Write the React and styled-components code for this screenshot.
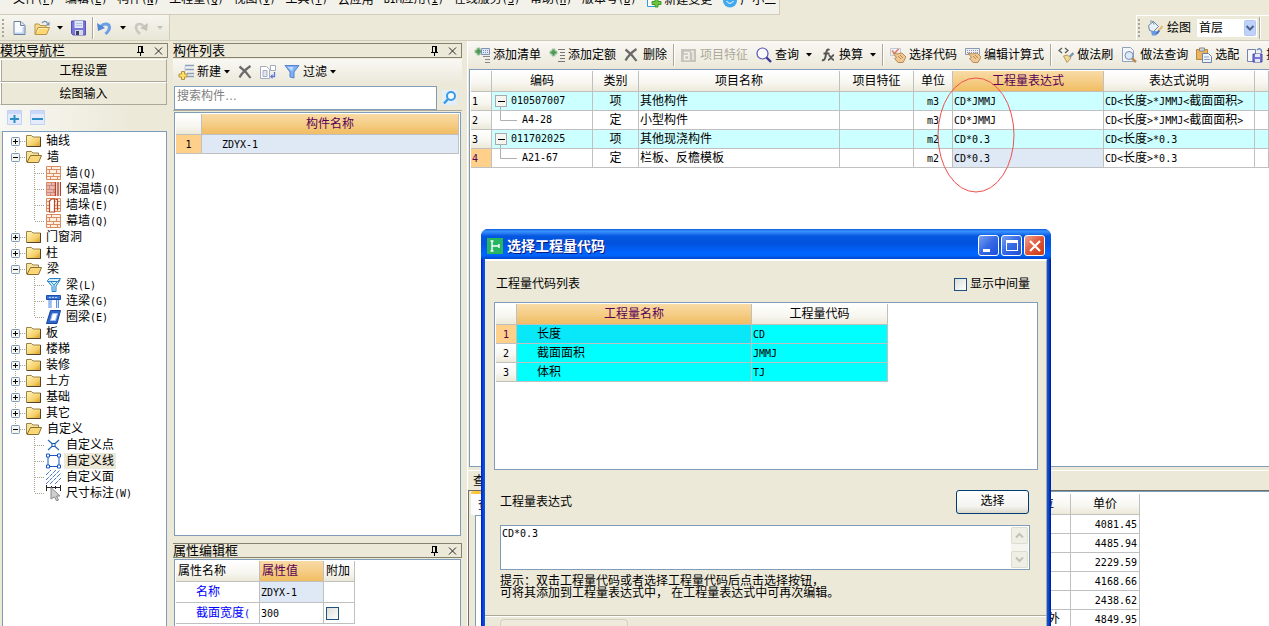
import React from 'react';
import styled, { createGlobalStyle, css } from 'styled-components';

const colors = {
  face: '#ece9d8',
  line: '#c0c0c0',
  field: '#7f9db9',
  shadow: '#aca899',
  purple: '#580058',
  cyan: '#ccffff',
  selected: '#dfe8f5',
  rowMark: '#ffd08a',
};

const GlobalStyle = createGlobalStyle`
  * {
    box-sizing: border-box;
  }

  body {
    margin: 0;
    background-color: ${colors.face};
    color: #000;
    font-family: 'Liberation Sans', 'Noto Sans CJK SC', sans-serif;
    font-size: 12px;
    line-height: 16px;
  }

  button,
  input,
  select,
  textarea {
    font: inherit;
    color: inherit;
  }

  svg {
    display: block;
    flex: none;
  }
`;

const headGradient = 'linear-gradient(#ffffff, #f7f6f0 60%, #ece9d8)';
const markGradient = 'linear-gradient(#f9dba6, #f5cd86 50%, #f0bd62)';

const Half = styled.span`
  font-family: 'DejaVu Sans Mono', 'Liberation Mono', monospace;
  font-size: 10px;
`;

// Latin runs take half the width of a Chinese character
function Mixed({ text }) {
  return text
    .split(/([\x20-\x7e]+)/)
    .map((part, i) => (i % 2 ? <Half key={i}>{part}</Half> : part));
}

/* ---------- page ---------- */

const Page = styled.div`
  position: relative;
  height: 100vh;
  display: flex;
  flex-direction: column;
  overflow: hidden;
`;

const MenuBar = styled.nav`
  align-self: flex-start;
  width: 780px;
  height: 15px;
  padding: 0 0 6px 13px;
  display: flex;
  align-items: flex-end;
  gap: 10px;
  overflow: hidden;
  white-space: nowrap;
  background-color: #f3f2ea;
  border-right: 1px solid #d0ccba;
  border-bottom: 1px solid #d0ccba;
`;

const MenuItem = styled.a`
  display: flex;
  align-items: center;
  gap: 2px;
  color: #000;
  text-decoration: none;
`;

const ToolbarRow = styled.div`
  height: 26px;
  flex: none;
  display: flex;
  justify-content: space-between;
  border-bottom: 1px solid #d0ccba;
`;

const FileTools = styled.div`
  width: 170px;
  padding-left: 2px;
  display: flex;
  align-items: center;
  background: linear-gradient(#f6f5ee, #e9e6d6);
  border-right: 1px solid #d0ccba;
`;

const FloorTools = styled.div`
  width: 133px;
  padding-left: 1px;
  display: flex;
  align-items: center;
  border-top: 1px solid #fff;
  border-left: 1px solid #fff;
`;

const Grip = styled.span`
  width: 2px;
  height: 18px;
  margin-right: 7px;
  background: repeating-linear-gradient(#a9a695 0 2px, transparent 2px 4px);
`;

const IconButton = styled.button`
  height: 22px;
  padding: 0;
  margin-right: ${({ $after = 0 }) => $after}px;
  display: flex;
  align-items: center;
  gap: ${({ $gap = 5 }) => $gap}px;
  background: none;
  border: none;
`;

const FloorLabel = styled.label`
  display: flex;
  align-items: center;
  gap: 4px;
  margin-right: 6px;
`;

const FloorPicker = styled.div`
  width: 60px;
  height: 18px;
  display: flex;
  align-items: center;
  background-color: #fff;
`;

const FloorSelect = styled.select`
  flex: 1;
  min-width: 0;
  height: 18px;
  padding: 0 2px;
  appearance: none;
  background: none;
  border: none;
`;

const Workspace = styled.div`
  flex: 1;
  min-height: 0;
  display: flex;
`;

const Column = styled.section`
  display: flex;
  flex-direction: column;
  min-width: 0;
  flex: none;
  width: ${({ $width }) => $width}px;
  margin-right: 5px;
  padding-top: 2px;
`;

const PanelTitle = styled.header`
  height: 15px;
  flex: none;
  margin-bottom: 1px;
  padding-right: 4px;
  display: flex;
  align-items: center;
  justify-content: space-between;
  font-size: 13px;
  line-height: 13px;
  border: 1px solid #85826f;
  border-left: none;
`;

const TitleActions = styled.span`
  display: flex;
  gap: 9px;
`;

const PlainButton = styled.button`
  padding: 0;
  background: none;
  border: none;
`;

/* ---------- left column ---------- */

const NavButton = styled.button`
  height: 23px;
  flex: none;
  padding: 1px 0 0;
  margin-right: 1px;
  background-color: ${colors.face};
  border: 1px solid #fff;
  border-right-color: ${colors.shadow};
  border-bottom-color: ${colors.shadow};
  box-shadow: inset 1px 0 0 ${colors.shadow};
`;

const TreeTools = styled.div`
  height: 26px;
  flex: none;
  padding: 0 7px;
  display: flex;
  align-items: center;
  gap: 8px;
  background: linear-gradient(90deg, #f8f8f4, #ece9d8 80%);
`;

const TreeBox = styled.div`
  flex: 1;
  margin: 0 1px 0 2px;
  padding: 1px 0 0 4px;
  background-color: #fff;
  border: 1px solid ${colors.field};
  border-bottom: none;
`;

const TreeList = styled.ul`
  margin: 0;
  padding: 0;
  list-style: none;
`;

const TreeRow = styled.div`
  height: 16px;
  display: flex;
  align-items: center;
  white-space: nowrap;
`;

const TreeLabel = styled.span`
  margin-left: 3px;
  padding: 0 2px;
  ${({ $selected }) =>
    $selected &&
    css`
      background-color: ${colors.face};
    `}
`;

/* ---------- middle column ---------- */

const Toolbar = styled.div`
  height: ${({ $height }) => $height}px;
  flex: none;
  padding-left: ${({ $start = 2 }) => $start}px;
  display: flex;
  align-items: center;
  overflow: hidden;
  white-space: nowrap;
  background: linear-gradient(#f9f8f4, #ebe8d9);
`;

const ToolButton = styled.button`
  height: 22px;
  flex: none;
  padding: 0 4px;
  display: flex;
  align-items: center;
  gap: 3px;
  background: none;
  border: none;

  &:disabled {
    color: #aca899;
  }
`;

const CaretBox = styled.span`
  margin-left: ${({ $wide }) => ($wide ? 4 : 0)}px;
`;

const Separator = styled.span`
  width: 2px;
  height: 22px;
  flex: none;
  margin: 0 2px;
  border-left: 1px solid ${colors.shadow};
  border-right: 1px solid #fff;
`;

const SearchRow = styled.form`
  height: 26px;
  flex: none;
  margin-bottom: 1px;
  padding-left: 1px;
  display: flex;
  align-items: center;
  gap: 5px;
  border-bottom: 1px solid ${colors.shadow};
`;

const SearchInput = styled.input`
  width: 263px;
  height: 24px;
  padding: 0 2px 4px;
  border: 1px solid ${colors.field};
  background-color: #fff;

  &::placeholder {
    color: #808080;
  }
`;

const SheetBox = styled.div`
  position: relative;
  flex: ${({ $height }) => ($height ? `0 0 ${$height}px` : '1')};
  min-height: 0;
  margin-left: ${({ $inset = 0 }) => $inset}px;
  margin-right: ${({ $inset = 0, $bleed }) => ($bleed ? 0 : $inset)}px;
  padding: 1px ${({ $bleed }) => ($bleed ? 0 : 1)}px 1px 1px;
  overflow: hidden;
  background-color: #fff;
  border: 1px solid ${colors.field};
  border-right-width: ${({ $bleed }) => ($bleed ? 0 : 1)}px;
  border-bottom-width: ${({ $open }) => ($open ? 0 : 1)}px;
`;

const Spacer = styled.div`
  height: 7px;
  flex: none;
`;

/* ---------- tables ---------- */

const Sheet = styled.table`
  width: ${({ $width }) => ($width ? `${$width}px` : '100%')};
  table-layout: fixed;
  border-collapse: separate;
  border-spacing: 0;
  line-height: 16px;
`;

const HeadCell = styled.th`
  height: 21px;
  padding: 0 2px;
  overflow: hidden;
  font-weight: normal;
  text-align: ${({ $align = 'center' }) => $align};
  white-space: nowrap;
  color: ${({ $marked }) => ($marked ? colors.purple : '#000')};
  background: ${({ $marked }) => ($marked ? markGradient : headGradient)};
  border-right: 1px solid ${colors.line};
  border-bottom: 1px solid ${colors.line};
`;

const Cell = styled.td`
  height: ${({ $tall }) => ($tall ? 21 : 19)}px;
  padding: 0 ${({ $pad = 1 }) => $pad}px;
  overflow: hidden;
  text-align: ${({ $align = 'left' }) => $align};
  white-space: nowrap;
  color: ${({ $color = '#000' }) => $color};
  background: ${({ $fill = '#fff' }) => $fill};
  border-right: 1px solid ${colors.line};
  border-bottom: 1px solid ${colors.line};
`;

const CodeContent = styled.div`
  height: 18px;
  display: flex;
  align-items: center;
`;

const CheckBox = styled.input`
  appearance: none;
  display: block;
  width: 13px;
  height: 13px;
  margin: 0;
  background: linear-gradient(135deg, #dcdcd7, #ffffff);
  border: 1px solid #1c5180;
`;

/* ---------- right column ---------- */

const MainColumn = styled.section`
  flex: 1;
  min-width: 0;
  display: flex;
  flex-direction: column;
  border-left: 1px solid #fff;
`;

const Marker = styled.svg`
  position: absolute;
  left: 467px;
  top: 7px;
`;

const LowerPane = styled.div`
  height: 156px;
  flex: none;
  margin-top: 3px;
  display: flex;
  flex-direction: column;
  border-top: 1px solid #fff;
`;

const LowerTitle = styled.div`
  height: 20px;
  padding: 2px 5px;
  border-bottom: 1px solid #716f64;
`;

const LowerBody = styled.div`
  flex: 1;
  display: flex;
  border-left: 1px solid #716f64;
`;

const TabPane = styled.div`
  width: 545px;
  flex: none;
  padding-left: 2px;
  display: flex;
  flex-direction: column;
  align-items: flex-start;
`;

const Tab = styled.button`
  height: 24px;
  padding: 0 7px;
  background-color: #fcfcfe;
  border: none;
  border-top: 3px solid #ffc73c;
  border-radius: 3px 3px 0 0;
`;

const TabBody = styled.div`
  flex: 1;
  align-self: stretch;
  margin-left: 4px;
  background-color: #fff;
  border: 1px solid ${colors.field};
`;

const PricePane = styled.div`
  flex: 1;
  padding-top: 2px;
  background-color: #fff;
  border-top: 1px solid ${colors.field};
`;

/* ---------- dialog ---------- */

const Dialog = styled.div`
  position: absolute;
  left: 481px;
  top: 229px;
  width: 570px;
  height: 430px;
  padding: 0 4px;
  display: flex;
  flex-direction: column;
  background: linear-gradient(90deg, #0019cf, #0855dd 3px, #0855dd 567px, #001590);
  border-radius: 7px 7px 0 0;
`;

const DialogTitle = styled.header`
  height: 30px;
  flex: none;
  margin: 0 -4px;
  padding: 3px 6px 0;
  display: flex;
  align-items: center;
  color: #fff;
  font-size: 14px;
  font-weight: bold;
  text-shadow: 1px 1px 0 #0a1883;
  border-radius: 7px 7px 0 0;
  background: linear-gradient(
    #0958d8,
    #3a93ff 2px,
    #2b80f5 4px,
    #0457e0 7px,
    #0252dd 14px,
    #0060f8 22px,
    #0066ff 26px,
    #0047cf
  );
`;

const DialogName = styled.h1`
  flex: 1;
  margin: 0 0 0 4px;
  font-size: 14px;
`;

const WindowButton = styled.button`
  width: 21px;
  height: 21px;
  margin-left: 2px;
  padding: 0;
  display: grid;
  place-items: center;
  border: 1px solid #fff;
  border-radius: 3px;
  background: ${({ $close }) =>
    $close
      ? 'linear-gradient(135deg, #eea58f, #e0563a 50%, #c83a12)'
      : 'linear-gradient(135deg, #7aa0f0, #3569e4 50%, #1d50d8)'};
`;

const DialogBody = styled.div`
  flex: 1;
  padding: 15px 8px 0 9px;
  display: flex;
  flex-direction: column;
  background-color: ${colors.face};
  border-top: 2px solid #fff;
  border-right: 1px solid ${colors.shadow};
`;

const DialogRow = styled.div`
  display: flex;
  align-items: center;
  justify-content: space-between;
  padding: 0 ${({ $right = 8 }) => $right}px 0 ${({ $left = 2 }) => $left}px;
  margin: ${({ $before = 0 }) => $before}px 0 ${({ $after }) => $after}px;
`;

const CheckLabel = styled.label`
  display: flex;
  align-items: center;
  gap: 3px;
`;

const PickButton = styled.button`
  width: 73px;
  height: 24px;
  padding: 0 0 2px;
  background: linear-gradient(#ffffff, #f3f3ef 70%, #dcd8cc);
  border: 1px solid #003c74;
  border-radius: 3px;
`;

const ExpressionBox = styled.div`
  width: 530px;
  height: 45px;
  margin: 0 0 5px 6px;
  padding: 1px;
  display: flex;
  background-color: #fff;
  border: 1px solid ${colors.field};
`;

const Expression = styled.textarea`
  flex: 1;
  padding: 0;
  resize: none;
  border: none;
  outline: none;
  background: none;
  font-family: 'DejaVu Sans Mono', 'Liberation Mono', monospace;
  font-size: 10px;
  line-height: 14px;
`;

const ScrollTrack = styled.div`
  width: 17px;
  display: flex;
  flex-direction: column;
  justify-content: space-between;
  background-color: #f5f4ef;
`;

const ScrollButton = styled.button`
  width: 17px;
  height: 17px;
  padding: 0;
  display: grid;
  place-items: center;
  background-color: #f0efe6;
  border: 1px solid #dddccf;
  border-radius: 2px;
`;

const Hint = styled.p`
  margin: 0 0 16px 6px;
  line-height: 12px;
  white-space: pre-line;
`;

const Footer = styled.div`
  margin: 0 -8px 0 -9px;
  padding: 3px 0 0 15px;
  border-top: 1px solid ${colors.shadow};
  box-shadow: inset 0 1px 0 #fff;
`;

const FooterButton = styled.button`
  display: block;
  width: 128px;
  height: 24px;
  background-color: #eeebdc;
  border: 1px solid #d2cfbd;
  border-radius: 4px;
`;

/* ---------- icons ---------- */

function Icon({ children, size = 16 }) {
  return (
    <svg width={size} height="16" viewBox={`0 0 ${size} 16`} aria-hidden="true">
      {children}
    </svg>
  );
}

function Caret({ wide, color = '#000' }) {
  return (
    <CaretBox $wide={wide}>
      <svg width="6" height="4" viewBox="0 0 6 4" aria-hidden="true">
        <path d="M0 0h6L3 3.5z" fill={color} />
      </svg>
    </CaretBox>
  );
}

const PinIcon = () => (
  <svg width="9" height="10" viewBox="0 0 9 10" shapeRendering="crispEdges" aria-hidden="true">
    <path d="M2 0h5v6h1v1H5v3H4V7H1V6h1zM3 1v5h2V1z" fill="#000" fillRule="evenodd" />
  </svg>
);

const CloseIcon = () => (
  <svg width="9" height="10" viewBox="0 0 9 10" aria-hidden="true">
    <path d="M1 1.5l7 7M8 1.5l-7 7" stroke="#222" />
  </svg>
);

const NewFileIcon = () => (
  <Icon>
    <path d="M3 1.500h7l4 4v9H3z" fill="#f7fbff" />
    <path d="M12.500 7v6.500H4" fill="none" stroke="#bcd2ee" strokeWidth="2" />
    <path d="M3 1.500h7l4 4v9H3z" fill="none" stroke="#6d7f9f" />
    <path d="M9.500 1.500v4h4" fill="#d6e4f6" stroke="#6d7f9f" />
  </Icon>
);

const OpenIcon = () => (
  <Icon>
    <path d="M1 14V4h4l1 1.500h6V8" fill="#f7dc8c" stroke="#b8954a" />
    <path d="M1 14.500l3-7h11.500l-3 7z" fill="#ffd873" stroke="#b8954a" />
    <path d="M3 12l2-3.500h8" fill="none" stroke="#ffefb8" />
    <path d="M8 3c2-2.500 4.500-2 5.500.5" fill="none" stroke="#7391b3" strokeWidth="1.400" />
    <path d="M15.500 1.500v4h-4z" fill="#7391b3" />
  </Icon>
);

const SaveIcon = () => (
  <Icon>
    <path d="M.5 1h14v14H2l-1.500-1.500z" fill="#7874d8" stroke="#5854b4" />
    <path d="M3.500 1h8.500v7H3.500z" fill="#dfe8f8" />
    <path d="M5 3.500h6M5 5.500h6" stroke="#b4c2e0" />
    <path d="M4 10h8v5H4z" fill="#d4dae8" />
    <path d="M5 11h3v4H5z" fill="#3c3f5e" />
  </Icon>
);

const UndoIcon = () => (
  <Icon>
    <path d="M5 6.500c3-4 8.500-3 8.500 1 0 3-2 4.500-4 6.500" fill="none" stroke="#6d9fe6" strokeWidth="3" />
    <path d="M1 3l1 8 7-3z" fill="#4f86d8" />
  </Icon>
);

const RedoIcon = () => (
  <Icon>
    <path d="M11 6.500C8 2.500 3 3.500 3 7.500c0 3 2 4.500 4 6.500" fill="none" stroke="#cac8c0" strokeWidth="2.600" />
    <path d="M15 3l-1 8-7-3z" fill="#c3c2bb" />
  </Icon>
);

const PaintIcon = () => (
  <Icon>
    <path d="M1.500 5.500l5-4 5 5-5 5-4-1z" fill="#e9eff6" stroke="#6c86a6" />
    <path d="M4 2.500c-2-2 2-3 3 2" fill="none" stroke="#6c86a6" />
    <path d="M4 11.500c4-1 6 0 8 1L9 15.500H5z" fill="#6b9ae2" />
    <path d="M15.500 6l-4 5" stroke="#e2b660" strokeWidth="2" />
    <path d="M11.500 10l1.500 1-2.500 3-2-.5z" fill="#3d6fc4" />
  </Icon>
);

const ComboArrow = () => (
  <svg width="13" height="16" viewBox="0 0 13 16" aria-hidden="true">
    <rect x="0.500" y="0.500" width="11" height="15" rx="1" fill="#bfd2fb" stroke="#b2c6f2" />
    <path d="M2.500 6L6 9.500 9.500 6" fill="none" stroke="#4d6185" strokeWidth="2" />
  </svg>
);

const PageAddIcon = () => (
  <Icon>
    <path d="M1.500.5h9v14h-9z" fill="#fff" stroke="#2f9ae0" />
    <path d="M9 7h3v2.500h3v3h-3V15H9v-2.500H6v-3h3z" fill="#6cc644" stroke="#3f9a2a" />
  </Icon>
);

const BearIcon = () => (
  <Icon>
    <circle cx="3.500" cy="3" r="2.500" fill="#41a9ef" />
    <circle cx="12.500" cy="3" r="2.500" fill="#41a9ef" />
    <ellipse cx="8" cy="9" rx="7" ry="6.500" fill="#41a9ef" />
    <path d="M4.500 9c2 3 5 3 7 0" fill="none" stroke="#fff" />
  </Icon>
);

const CreateIcon = () => (
  <Icon>
    <path d="M7 1.500h9M7 5.500h9M9 9.500h7M9 12.500h7" stroke="#8d9fc0" strokeWidth="1.500" />
    <path d="M7 2v8" stroke="#c3cee2" />
    <path d="M3.500 7.500h3v2.500h2.500v3H6.500v2.500h-3V13H1v-3h2.500z" fill="#ffe06a" stroke="#b8923a" />
  </Icon>
);

const DeleteIcon = ({ size = 16 }) => (
  <Icon size={size}>
    <path
      d="M1.500 2.500c4 3 8 7 11 11.500M12.500 2C8 5 4 9 1.500 13.500"
      fill="none"
      stroke="#6a6a6a"
      strokeWidth="2.200"
    />
  </Icon>
);

const CopyIcon = () => (
  <Icon>
    <path d="M.5 2.500h6l3 3v9h-9z" fill="#fff" stroke="#a3abc0" />
    <path d="M3 6.500h4v6H3z" fill="#e3e6ee" stroke="#a3abc0" />
    <path d="M10.500 1.500h5v5h-5z" fill="#fff" stroke="#a3abc0" />
    <path d="M14.500 8v4.500H11" fill="none" stroke="#5877d8" strokeWidth="1.300" />
    <path d="M12.500 10L10 12.500l2.500 2.500z" fill="#5877d8" />
  </Icon>
);

const FilterIcon = () => (
  <Icon>
    <path d="M1 1.500h14L10 8v6l-4-1V8z" fill="#7fb0f2" stroke="#5584d0" />
    <path d="M3.500 3h6L8 7z" fill="#c4dcfb" />
  </Icon>
);

const SearchIcon = () => (
  <Icon>
    <rect width="15" height="15" y="0" fill="#e1effc" />
    <circle cx="9" cy="6" r="4" fill="#f5fbff" stroke="#3c9be0" strokeWidth="2" />
    <path d="M6 9l-4 4.500" stroke="#3c9be0" strokeWidth="2.400" />
  </Icon>
);

const AddListIcon = () => (
  <Icon>
    <path d="M3 1h3v2h2v3H6v2H3V6H1V3h2z" fill="#4f9a55" stroke="#a7cba9" />
    <path d="M7.500 1.500h8v6h-8z" fill="#e0e8f8" stroke="#7d90b8" />
    <path d="M9 3.500h6M9 5.500h6" stroke="#7d90b8" strokeDasharray="1 1" />
    <path d="M9 9.500h7M11 12.500h5M11 15.500h5" stroke="#888" />
  </Icon>
);

const AddQuotaIcon = () => (
  <Icon>
    <path d="M3 2h3v2h2v3H6v2H3V7H1V4h2z" fill="#4f9a55" stroke="#a7cba9" />
    <path d="M9 2.500h7M11 5.500h5M11 8.500h5M11 11.500h5M9 14.500h7" stroke="#777" />
  </Icon>
);

const FeatureIcon = () => (
  <Icon>
    <rect x="0" y="2" width="15" height="13" fill="#c5c3ba" />
    <path d="M3 5.500h5v7H3.500v-4H8" fill="none" stroke="#f2f1ea" strokeWidth="1.600" />
    <path d="M10 4.500h2V13" fill="none" stroke="#f2f1ea" strokeWidth="1.400" />
  </Icon>
);

const QueryIcon = () => (
  <Icon>
    <circle cx="6.500" cy="6.500" r="5.500" fill="#fafaff" stroke="#5654b4" strokeWidth="1.200" />
    <path d="M10.500 10.500l4.500 4.500" stroke="#3a3894" strokeWidth="2.400" />
  </Icon>
);

const FxIcon = () => (
  <Icon>
    <path
      d="M9.500 3C7 1.500 6.500 4 6 7c-.5 4-1.500 7-4 6M3.500 6.500h6"
      fill="none"
      stroke="#555"
      strokeWidth="2"
    />
    <path d="M8.500 8c2 0 2.500 5 5.500 5M14 8c-2.500 0-3 5-6 5" fill="none" stroke="#555" strokeWidth="1.800" />
  </Icon>
);

const HandIcon = ({ keyboard }) => (
  <Icon>
    {keyboard ? (
      <>
        <path d="M.5 1.500h14v6H.5z" fill="#eef1f6" stroke="#8c98ac" />
        <path d="M2 3.500h11M2 5.500h11" stroke="#8c98ac" strokeDasharray="1 1" />
      </>
    ) : (
      <>
        <path d="M.5 1.500h10v7H.5z" fill="#eceff4" stroke="#c4c9d3" />
        <path d="M2 3.500l2.500 3 4-4.500" fill="none" stroke="#e87a66" strokeWidth="1.500" />
      </>
    )}
    <path d="M3 6l4 1 5-1 4 4-3 5.500H8L4.500 11.500l2-1z" fill="#f0c894" stroke="#b98a52" />
    <path d="M8 9l3 3M10 8l3 3" stroke="#b98a52" />
  </Icon>
);

const BrushIcon = () => (
  <Icon>
    <path d="M4 1L1 3.500 4 6M7 1l3 2.500L7 6" fill="none" stroke="#555" strokeWidth="1.200" />
    <path d="M15.500 6l-4 4" stroke="#7a93b8" strokeWidth="2.400" />
    <path d="M5.500 9l4-1 3.500 3-4 4.500z" fill="#f1d79b" stroke="#b99a58" />
  </Icon>
);

const PageQueryIcon = () => (
  <Icon>
    <path d="M1.500.5h8l3 3v11h-11z" fill="#f3f7fc" stroke="#8ea0ba" />
    <circle cx="8" cy="8.500" r="4" fill="#dbeafb" stroke="#7d8fa9" />
    <path d="M11 11.500l4 3.500" stroke="#ba8b4c" strokeWidth="2.400" />
  </Icon>
);

const PasteIcon = () => (
  <Icon>
    <path d="M.5 2.500h11v10H.5z" fill="#ebb45e" stroke="#b98636" />
    <path d="M3.500 1h5v3h-5z" fill="#d4d8e0" stroke="#888" />
    <path d="M6.500 6.500h6l3 3v6h-9z" fill="#eff4fb" stroke="#6f83a5" />
    <path d="M8 10h5M8 12.500h6" stroke="#93a5c2" />
  </Icon>
);

const ExtractIcon = () => (
  <Icon>
    <path d="M.5 2.500h8v12h-8z" fill="#f4f7fc" stroke="#7385ad" />
    <path d="M6 7h9v8H6z" fill="#7874d8" stroke="#4a46a4" />
    <path d="M8 7h5v3H8zM8 12h5v3H8z" fill="#e3e8f5" />
    <path d="M10 3c3-3 5 0 4.500 3" fill="none" stroke="#6289bd" strokeWidth="1.400" />
  </Icon>
);

const FoldIcon = ({ plus }) => (
  <Icon size={15}>
    <path d="M.5.500h14v14H.500z" fill="#e3ebfc" stroke="#c3d2f4" />
    <path d="M1 1h13v3H1z" fill="#cbd8f8" />
    <path d={plus ? 'M3 9h9M7.500 5v8' : 'M2 9h11'} stroke="#2c8fc6" strokeWidth="2" />
  </Icon>
);

const FolderIcon = () => (
  <Icon size={15}>
    <defs>
      <linearGradient id="folder" x1="0" y1="0" x2="1" y2="1">
        <stop offset="0" stopColor="#fff4bd" />
        <stop offset="0.600" stopColor="#f7d36e" />
        <stop offset="1" stopColor="#d49b26" />
      </linearGradient>
    </defs>
    <path d="M.5 4V2.500h5L7 4h7.500v9.500H.500z" fill="url(#folder)" stroke="#9c8347" />
    <path d="M14.500 4v9.500H1" fill="none" stroke="#54452a" />
  </Icon>
);

const FolderOpenIcon = () => (
  <Icon>
    <path d="M.5 13V2.500h5L7 4h5.500v3" fill="#f7e3a0" stroke="#9c8347" />
    <path d="M1 13.500l3.500-7h11l-3 7z" fill="#fbd778" stroke="#8a6f2f" />
  </Icon>
);

const BrickIcon = ({ kind }) => (
  <Icon size={15}>
    <path d="M.5 1.500h14v13H.500z" fill={kind === 'warm' ? '#eab8ae' : '#fff1e2'} stroke="#d98a5e" />
    <path
      d="M0 4.500h15M0 8.500h15M0 11.500h15M5.500 1v3M10.500 4v4M3.500 4v4M7.500 8v3M11.500 11v3M4.500 11v3"
      fill="none"
      stroke={kind === 'warm' ? '#c98a80' : '#dc8b62'}
    />
    {kind === 'warm' && (
      <>
        <path d="M9 1h6v14H9z" fill="#fff" />
        <path d="M9.500 1v14M12 1v14M14.500 1v14" stroke="#b54326" strokeWidth="1.400" />
      </>
    )}
    {kind === 'pier' && (
      <path d="M3.500 15V4l2-2h3v13zM9.500 2.500h2V13" fill="#fff" stroke="#b54a26" strokeWidth="1.200" />
    )}
  </Icon>
);

const BeamIcon = () => (
  <Icon size={15}>
    <path d="M1.500 3.500l2-2h11l-2 3h-11zM2 4.500l4 5v5h4V9l4-6" fill="#d3ecfb" stroke="#2a7fc4" />
    <path d="M4 4l4 4 5-5M8 8v6" fill="none" stroke="#2a9fd4" />
  </Icon>
);

const LinkBeamIcon = () => (
  <Icon size={15}>
    <path d="M.5 2.500h14v4H.500z" fill="#3a72d4" stroke="#1c4cae" />
    <path d="M3 4.500h9" stroke="#b8d0f8" strokeDasharray="2 1" />
    <path d="M4 7v8M11.500 7v8" stroke="#5f93e6" strokeWidth="3" />
    <path d="M4 7v8M11.500 7v8" stroke="#d4e4fb" />
  </Icon>
);

const RingBeamIcon = () => (
  <Icon size={15}>
    <path d="M4.500 1.500h10l-3.500 13H.500z" fill="#2c64cc" stroke="#1a459c" />
    <path d="M6.500 4.500h5l-2 7h-5z" fill="#fff" stroke="#9fc0f4" />
  </Icon>
);

const PointIcon = () => (
  <Icon size={15}>
    <path d="M2 3l11 10M13 3L2 13" stroke="#2a6ab8" strokeWidth="1.200" />
    <path d="M6 6.500h3v3H6z" fill="#fff" stroke="#1a55b8" />
  </Icon>
);

const LineIcon = () => (
  <Icon size={15}>
    <path d="M2 2.500h11v11H2z" fill="none" stroke="#1b56c4" />
    <path d="M.5 1h3v3h-3zM11.500 1h3v3h-3zM.5 12h3v3h-3zM11.500 12h3v3h-3z" fill="#fff" stroke="#1b56c4" />
  </Icon>
);

const AreaIcon = () => (
  <Icon size={15}>
    <path d="M0 6l5-5M0 11L10 1M0 15L14 1M4 15L15 4M9 15l6-6" stroke="#4a72c4" strokeDasharray="4 1" />
  </Icon>
);

const SizeIcon = () => (
  <Icon size={15}>
    <path d="M.5 0v6M14.500 0v6M0 2.500h15M5.500 1v3M9.500 1v3" stroke="#222" />
    <path d="M5 2.500l9 8.500h-3.500l2 4-2 .8-2-4L5 14z" fill="#cfcfcf" stroke="#888" />
  </Icon>
);

/* ---------- tree ---------- */

const tree = [
  { name: '轴线' },
  {
    name: '墙',
    items: [
      { name: '墙(Q)', icon: <BrickIcon /> },
      { name: '保温墙(Q)', icon: <BrickIcon kind="warm" /> },
      { name: '墙垛(E)', icon: <BrickIcon kind="pier" /> },
      { name: '幕墙(Q)', icon: <BrickIcon /> },
    ],
  },
  { name: '门窗洞' },
  { name: '柱' },
  {
    name: '梁',
    items: [
      { name: '梁(L)', icon: <BeamIcon /> },
      { name: '连梁(G)', icon: <LinkBeamIcon /> },
      { name: '圈梁(E)', icon: <RingBeamIcon /> },
    ],
  },
  { name: '板' },
  { name: '楼梯' },
  { name: '装修' },
  { name: '土方' },
  { name: '基础' },
  { name: '其它' },
  {
    name: '自定义',
    items: [
      { name: '自定义点', icon: <PointIcon /> },
      { name: '自定义线', icon: <LineIcon />, selected: true },
      { name: '自定义面', icon: <AreaIcon /> },
      { name: '尺寸标注(W)', icon: <SizeIcon /> },
    ],
  },
];

const dots = { stroke: '#a5a28c', strokeDasharray: '1 1', fill: 'none' };

function Expander({ open, first, last }) {
  return (
    <svg width="19" height="16" viewBox="0 0 19 16" aria-hidden="true">
      <path d={`M8.500 ${first ? 8 : 0}V${last ? 8 : 16}M13 8.500h6`} {...dots} />
      <rect x="4.500" y="4.500" width="8" height="8" rx="1" fill="#f6f5f0" stroke="#7898b5" />
      <path d={open ? 'M6 8.500h5' : 'M6 8.500h5M8.500 6v5'} stroke="#000" />
    </svg>
  );
}

function Branch({ trunk, last }) {
  return (
    <svg width="39" height="16" viewBox="0 0 39 16" aria-hidden="true">
      {trunk && <path d="M8.500 0v16" {...dots} />}
      <path d={`M27.500 0V${last ? 8 : 16}M28 8.500h10`} {...dots} />
    </svg>
  );
}

function Tree() {
  return (
    <TreeList>
      {tree.map((group, g) => {
        const last = g === tree.length - 1;
        return (
          <li key={group.name}>
            <TreeRow>
              <PlainButton aria-label={group.name}>
                <Expander open={!!group.items} first={g === 0} last={last} />
              </PlainButton>
              {group.items ? <FolderOpenIcon /> : <FolderIcon />}
              <TreeLabel>{group.name}</TreeLabel>
            </TreeRow>
            {group.items && (
              <TreeList>
                {group.items.map((item, i) => (
                  <TreeRow as="li" key={item.name}>
                    <Branch trunk={!last} last={i === group.items.length - 1} />
                    {item.icon}
                    <TreeLabel $selected={item.selected}>
                      <Mixed text={item.name} />
                    </TreeLabel>
                  </TreeRow>
                ))}
              </TreeList>
            )}
          </li>
        );
      })}
    </TreeList>
  );
}

/* ---------- data ---------- */

const menus = [
  ['文件', 'F'],
  ['编辑', 'E'],
  ['构件', 'N'],
  ['工程量', 'Q'],
  ['视图', 'V'],
  ['工具', 'T'],
  ['云应用'],
  ['BIM应用', 'I'],
  ['在线服务', 'S'],
  ['帮助', 'H'],
  ['版本号', 'B'],
];

const methods = [
  { code: '010507007', kind: '项', name: '其他构件', unit: 'm3', expr: 'CD*JMMJ', note: 'CD<长度>*JMMJ<截面面积>', parent: true },
  { code: 'A4-28', kind: '定', name: '小型构件', unit: 'm3', expr: 'CD*JMMJ', note: 'CD<长度>*JMMJ<截面面积>' },
  { code: '011702025', kind: '项', name: '其他现浇构件', unit: 'm2', expr: 'CD*0.3', note: 'CD<长度>*0.3', parent: true },
  { code: 'A21-67', kind: '定', name: '栏板、反檐模板', unit: 'm2', expr: 'CD*0.3', note: 'CD<长度>*0.3', current: true },
];

const quantities = [
  ['长度', 'CD'],
  ['截面面积', 'JMMJ'],
  ['体积', 'TJ'],
];

const prices = [
  ['', '4081.45'],
  ['', '4485.94'],
  ['', '2229.59'],
  ['', '4168.66'],
  ['', '2438.62'],
  ['外', '4849.95'],
];

function CodeBranch({ parent }) {
  return parent ? (
    <svg width="18" height="18" viewBox="0 0 18 18" aria-hidden="true">
      <rect x="2.500" y="3.500" width="11" height="11" fill="#f6f5f0" stroke="#aaa" />
      <path d="M5 9.500h7" stroke="#000" />
      <path d="M7.500 15v3" stroke="#b0b0b0" />
    </svg>
  ) : (
    <svg width="29" height="18" viewBox="0 0 29 18" aria-hidden="true">
      <path d="M7.500 0v9.500H24" fill="none" stroke="#b0b0b0" />
    </svg>
  );
}

function Columns({ widths }) {
  return (
    <colgroup>
      {widths.map((width, i) => (
        <col key={i} width={width} />
      ))}
    </colgroup>
  );
}

function Title({ children }) {
  return (
    <PanelTitle>
      {children}
      <TitleActions>
        <PlainButton aria-label="固定">
          <PinIcon />
        </PlainButton>
        <PlainButton aria-label="关闭">
          <CloseIcon />
        </PlainButton>
      </TitleActions>
    </PanelTitle>
  );
}

function MethodTable() {
  return (
    <Sheet>
      <Columns widths={[21, 101, 46, 201, 74, 39, 151, 151, undefined]} />
      <thead>
        <tr>
          <HeadCell />
          <HeadCell>编码</HeadCell>
          <HeadCell>类别</HeadCell>
          <HeadCell>项目名称</HeadCell>
          <HeadCell>项目特征</HeadCell>
          <HeadCell>单位</HeadCell>
          <HeadCell $marked>工程量表达式</HeadCell>
          <HeadCell>表达式说明</HeadCell>
          <HeadCell />
        </tr>
      </thead>
      <tbody>
        {methods.map((row, i) => {
          const fill = row.parent ? colors.cyan : '#fff';
          return (
            <tr key={row.code}>
              <Cell
                $fill={row.current ? colors.rowMark : headGradient}
                $color={row.current ? colors.purple : '#000'}
              >
                <Mixed text={String(i + 1)} />
              </Cell>
              <Cell $fill={fill}>
                <CodeContent>
                  <CodeBranch parent={row.parent} />
                  <Mixed text={row.code} />
                </CodeContent>
              </Cell>
              <Cell $fill={fill} $align="center">{row.kind}</Cell>
              <Cell $fill={fill}>{row.name}</Cell>
              <Cell $fill={fill} />
              <Cell $fill={fill} $align="center">
                <Mixed text={row.unit} />
              </Cell>
              <Cell $fill={row.current ? colors.selected : fill}>
                <Mixed text={row.expr} />
              </Cell>
              <Cell $fill={fill}>
                <Mixed text={row.note} />
              </Cell>
              <Cell $fill={fill} />
            </tr>
          );
        })}
      </tbody>
    </Sheet>
  );
}

function CodeDialog() {
  return (
    <Dialog role="dialog" aria-labelledby="dialog-name">
      <DialogTitle>
        <Icon>
          <rect width="16" height="16" fill="#26b562" />
          <path d="M5 3v10M3.500 3h3M3.500 13h3M5 8h7M12 6v4" stroke="#fff" strokeWidth="1.400" />
        </Icon>
        <DialogName id="dialog-name">选择工程量代码</DialogName>
        <WindowButton aria-label="最小化">
          <Icon>
            <path d="M2 11h7v3H2z" fill="#fff" />
          </Icon>
        </WindowButton>
        <WindowButton aria-label="最大化">
          <Icon>
            <path d="M2 2h12v11H2zM3 5v7h10V5z" fill="#fff" fillRule="evenodd" />
          </Icon>
        </WindowButton>
        <WindowButton aria-label="关闭" $close>
          <Icon>
            <path d="M3 3l10 10M13 3L3 13" stroke="#fff" strokeWidth="2.200" />
          </Icon>
        </WindowButton>
      </DialogTitle>

      <DialogBody>
        <DialogRow $after={10}>
          <span>工程量代码列表</span>
          <CheckLabel>
            <CheckBox type="checkbox" />
            显示中间量
          </CheckLabel>
        </DialogRow>

        <SheetBox $height={168}>
          <Sheet $width={392}>
            <Columns widths={[21, 235, 136]} />
            <thead>
              <tr>
                <HeadCell />
                <HeadCell $marked>工程量名称</HeadCell>
                <HeadCell>工程量代码</HeadCell>
              </tr>
            </thead>
            <tbody>
              {quantities.map(([name, code], i) => (
                <tr key={code}>
                  <Cell
                    $align="center"
                    $fill={i ? headGradient : colors.rowMark}
                    $color={i ? '#000' : colors.purple}
                  >
                    <Mixed text={String(i + 1)} />
                  </Cell>
                  <Cell $pad={20} $fill={i ? '#00ffff' : '#08e8f8'}>{name}</Cell>
                  <Cell $fill="#00ffff">
                    <Mixed text={code} />
                  </Cell>
                </tr>
              ))}
            </tbody>
          </Sheet>
        </SheetBox>

        <DialogRow $left={6} $right={9} $before={20} $after={11}>
          <label htmlFor="expression">工程量表达式</label>
          <PickButton>选择</PickButton>
        </DialogRow>

        <ExpressionBox>
          <Expression id="expression" defaultValue="CD*0.3" />
          <ScrollTrack>
            <ScrollButton aria-label="向上">
              <svg width="9" height="7" viewBox="0 0 9 7" aria-hidden="true">
                <path d="M1 5.500L4.500 2 8 5.500" fill="none" stroke="#c4c2b8" strokeWidth="2" />
              </svg>
            </ScrollButton>
            <ScrollButton aria-label="向下">
              <svg width="9" height="7" viewBox="0 0 9 7" aria-hidden="true">
                <path d="M1 1.500L4.500 5 8 1.500" fill="none" stroke="#c4c2b8" strokeWidth="2" />
              </svg>
            </ScrollButton>
          </ScrollTrack>
        </ExpressionBox>

        <Hint>
          {'提示：双击工程量代码或者选择工程量代码后点击选择按钮，\n可将其添加到工程量表达式中， 在工程量表达式中可再次编辑。'}
        </Hint>
        <Footer>
          <FooterButton disabled aria-label="操作" />
        </Footer>
      </DialogBody>
    </Dialog>
  );
}

export default function App() {
  return (
    <Page>
      <GlobalStyle />
      <MenuBar>
        {menus.map(([name, key]) => (
          <MenuItem href="#" key={name}>
            <span>
              <Mixed text={name} />
              {key && (
                <Half>
                  (<u>{key}</u>)
                </Half>
              )}
            </span>
          </MenuItem>
        ))}
        <MenuItem href="#">
          <PageAddIcon />
          新建变更
        </MenuItem>
        <MenuItem href="#">
          <BearIcon />
          广小二
        </MenuItem>
      </MenuBar>

      <ToolbarRow>
        <FileTools>
          <Grip />
          <IconButton aria-label="新建" $after={7}>
            <NewFileIcon />
          </IconButton>
          <IconButton aria-label="打开" $after={8} $gap={7}>
            <OpenIcon />
            <Caret />
          </IconButton>
          <IconButton aria-label="保存" $after={3}>
            <SaveIcon />
          </IconButton>
          <Separator />
          <IconButton aria-label="撤销" $after={7} $gap={8}>
            <UndoIcon />
            <Caret />
          </IconButton>
          <IconButton aria-label="重做" disabled $gap={8}>
            <RedoIcon />
            <Caret color="#c3c2bb" />
          </IconButton>
        </FileTools>
        <FloorTools>
          <Grip />
          <FloorLabel htmlFor="floor">
            <PaintIcon />
            绘图
          </FloorLabel>
          <FloorPicker>
            <FloorSelect id="floor" defaultValue="首层">
              <option>首层</option>
            </FloorSelect>
            <ComboArrow />
          </FloorPicker>
          <Separator />
        </FloorTools>
      </ToolbarRow>

      <Workspace>
        <Column $width={168}>
          <Title>模块导航栏</Title>
          <NavButton>工程设置</NavButton>
          <NavButton>绘图输入</NavButton>
          <TreeTools>
            <PlainButton aria-label="全部展开">
              <FoldIcon plus />
            </PlainButton>
            <PlainButton aria-label="全部折叠">
              <FoldIcon />
            </PlainButton>
          </TreeTools>
          <TreeBox>
            <Tree />
          </TreeBox>
        </Column>

        <Column $width={289}>
          <Title>构件列表</Title>
          <Toolbar $height={26} $start={1}>
            <ToolButton>
              <CreateIcon />
              新建
              <Caret />
            </ToolButton>
            <ToolButton aria-label="删除">
              <DeleteIcon size={14} />
            </ToolButton>
            <ToolButton aria-label="复制">
              <CopyIcon />
            </ToolButton>
            <ToolButton>
              <FilterIcon />
              过滤
              <Caret />
            </ToolButton>
          </Toolbar>
          <SearchRow>
            <SearchInput type="search" placeholder="搜索构件…" aria-label="搜索构件" />
            <PlainButton type="button" aria-label="搜索">
              <SearchIcon />
            </PlainButton>
          </SearchRow>
          <SheetBox $inset={1}>
            <Sheet>
              <Columns widths={[26, undefined]} />
              <thead>
                <tr>
                  <HeadCell />
                  <HeadCell $marked>构件名称</HeadCell>
                </tr>
              </thead>
              <tbody>
                <tr>
                  <Cell $align="center" $fill={colors.rowMark}>
                    <Mixed text="1" />
                  </Cell>
                  <Cell $pad={20} $fill={colors.selected}>
                    <Mixed text="ZDYX-1" />
                  </Cell>
                </tr>
              </tbody>
            </Sheet>
          </SheetBox>
          <Spacer />
          <Title>属性编辑框</Title>
          <SheetBox $height={67} $inset={1} $open>
            <Sheet $width={179}>
              <Columns widths={[84, 64, 31]} />
              <thead>
                <tr>
                  <HeadCell $align="left">属性名称</HeadCell>
                  <HeadCell $align="left" $marked>属性值</HeadCell>
                  <HeadCell $align="left">附加</HeadCell>
                </tr>
              </thead>
              <tbody>
                <tr>
                  <Cell $tall $pad={20} $color="#0000ff">名称</Cell>
                  <Cell $tall $fill={colors.selected}>
                    <Mixed text="ZDYX-1" />
                  </Cell>
                  <Cell $tall />
                </tr>
                <tr>
                  <Cell $tall $pad={20} $color="#0000ff">
                    <Mixed text="截面宽度(" />
                  </Cell>
                  <Cell $tall>
                    <Mixed text="300" />
                  </Cell>
                  <Cell $tall $pad={2}>
                    <CheckBox type="checkbox" aria-label="附加" />
                  </Cell>
                </tr>
              </tbody>
            </Sheet>
          </SheetBox>
        </Column>

        <MainColumn>
          <Toolbar $height={28}>
            <ToolButton>
              <AddListIcon />
              添加清单
            </ToolButton>
            <ToolButton>
              <AddQuotaIcon />
              添加定额
            </ToolButton>
            <ToolButton>
              <DeleteIcon />
              删除
            </ToolButton>
            <Separator />
            <ToolButton disabled>
              <FeatureIcon />
              项目特征
            </ToolButton>
            <ToolButton>
              <QueryIcon />
              查询
              <Caret wide />
            </ToolButton>
            <ToolButton>
              <FxIcon />
              换算
              <Caret wide />
            </ToolButton>
            <Separator />
            <ToolButton>
              <HandIcon />
              选择代码
            </ToolButton>
            <ToolButton>
              <HandIcon keyboard />
              编辑计算式
            </ToolButton>
            <Separator />
            <ToolButton>
              <BrushIcon />
              做法刷
            </ToolButton>
            <ToolButton>
              <PageQueryIcon />
              做法查询
            </ToolButton>
            <ToolButton>
              <PasteIcon />
              选配
            </ToolButton>
            <ToolButton>
              <ExtractIcon />
              提取
            </ToolButton>
          </Toolbar>
          <SheetBox $inset={1} $bleed>
            <MethodTable />
            <Marker width="78" height="116" viewBox="0 0 78 116" aria-hidden="true">
              <ellipse cx="39" cy="58" rx="38" ry="57" fill="none" stroke="#f0504c" />
            </Marker>
          </SheetBox>
          <LowerPane>
            <LowerTitle>查询</LowerTitle>
            <LowerBody>
              <TabPane>
                <Tab>查询</Tab>
                <TabBody />
              </TabPane>
              <PricePane>
                <Sheet $width={126}>
                  <Columns widths={[57, 69]} />
                  <thead>
                    <tr>
                      <HeadCell>单位</HeadCell>
                      <HeadCell>单价</HeadCell>
                    </tr>
                  </thead>
                  <tbody>
                    {prices.map(([unit, price]) => (
                      <tr key={price}>
                        <Cell $align="right" $pad={10}>{unit}</Cell>
                        <Cell $align="right" $pad={2}>
                          <Mixed text={price} />
                        </Cell>
                      </tr>
                    ))}
                  </tbody>
                </Sheet>
              </PricePane>
            </LowerBody>
          </LowerPane>
        </MainColumn>
      </Workspace>

      <CodeDialog />
    </Page>
  );
}
